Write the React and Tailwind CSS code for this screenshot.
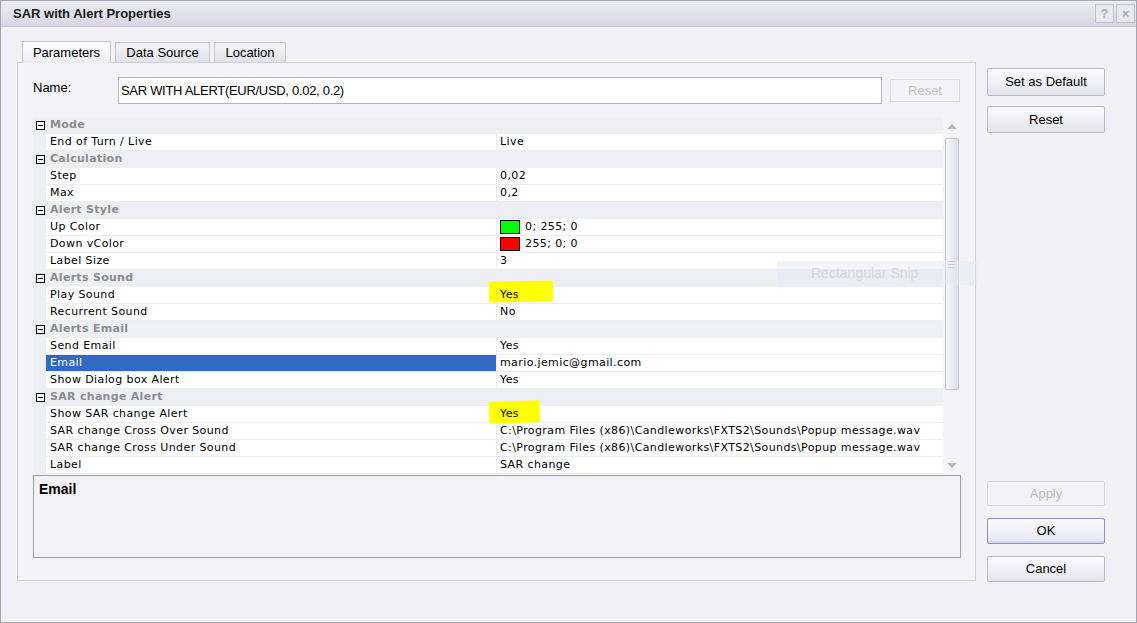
import React from 'react'

const rows = [
  { cat: 'Mode' },
  { name: 'End of Turn / Live', value: 'Live' },
  { cat: 'Calculation' },
  { name: 'Step', value: '0,02' },
  { name: 'Max', value: '0,2' },
  { cat: 'Alert Style' },
  { name: 'Up Color', value: '0; 255; 0', swatch: 'bg-[#00ff00]' },
  { name: 'Down vColor', value: '255; 0; 0', swatch: 'bg-[#ff0000]' },
  { name: 'Label Size', value: '3' },
  { cat: 'Alerts Sound' },
  { name: 'Play Sound', value: 'Yes', mark: 'a' },
  { name: 'Recurrent Sound', value: 'No' },
  { cat: 'Alerts Email' },
  { name: 'Send Email', value: 'Yes' },
  { name: 'Email', value: 'mario.jemic@gmail.com', selected: true },
  { name: 'Show Dialog box Alert', value: 'Yes' },
  { cat: 'SAR change Alert' },
  { name: 'Show SAR change Alert', value: 'Yes', mark: 'b' },
  { name: 'SAR change Cross Over Sound', value: 'C:\\Program Files (x86)\\Candleworks\\FXTS2\\Sounds\\Popup message.wav' },
  { name: 'SAR change Cross Under Sound', value: 'C:\\Program Files (x86)\\Candleworks\\FXTS2\\Sounds\\Popup message.wav' },
  { name: 'Label', value: 'SAR change' },
]

const ui = { fontFamily: '"Liberation Sans", Arial, sans-serif' }
const grid = { fontFamily: '"DejaVu Sans", Verdana, sans-serif' }

function Button({ children, disabled, primary, className = '' }) {
  return (
    <button
      className={`w-[118px] rounded-[2px] border text-[13px] ${
        disabled
          ? 'border-[#d6d6e0] bg-[#f3f3f7] text-[#b8b8c4]'
          : primary
            ? 'border-[#8e8ec8] bg-gradient-to-b from-[#fbfbfd] to-[#e6e6f2] text-black shadow-[inset_0_-2px_0_#d4d4ee]'
            : 'border-[#b8b8c8] bg-gradient-to-b from-[#fbfbfd] to-[#e4e4ee] text-black'
      } ${className}`}
      style={ui}
    >
      {children}
    </button>
  )
}

function Minus() {
  return (
    <span className="flex h-[9px] w-[9px] items-center justify-center border border-black bg-white">
      <span className="h-px w-[5px] bg-black" />
    </span>
  )
}

function Row({ r }) {
  if (r.cat) {
    return (
      <div className="flex h-[17px] items-center bg-[#eeeef5]">
        <div className="flex w-[13px] justify-center pl-[1px]">
          <Minus />
        </div>
        <span className="pl-[4px] text-[11px] font-bold tracking-[0.3px] text-[#8c8c94]" style={grid}>{r.cat}</span>
      </div>
    )
  }
  return (
    <div className="flex h-[17px] bg-[#eeeef5]">
      <div className="w-[13px]" />
      <div
        className={`flex w-[451px] items-center border-b border-r border-[#ececf3] pl-[4px] text-[11px] tracking-[0.4px] ${
          r.selected ? 'bg-[#316ac5] text-white' : 'bg-white text-black'
        }`}
        style={grid}
      >
        {r.name}
      </div>
      <div className="relative flex flex-1 items-center gap-[5px] border-b border-[#ececf3] bg-white pl-[3px] text-[11px] tracking-[0.4px] text-black" style={grid}>
        {r.mark === 'a' && <span className="absolute left-[-8px] top-[-6px] h-[21px] w-[64px] rotate-[-1deg] rounded-[2px] bg-[#ffff00]" />}
        {r.mark === 'b' && <span className="absolute left-[-8px] top-[-5px] h-[22px] w-[51px] rotate-[-2deg] rounded-[2px] bg-[#ffff00]" />}
        {r.swatch && <span className={`h-[14px] w-[20px] border border-black ${r.swatch}`} />}
        <span className="relative">{r.value}</span>
      </div>
    </div>
  )
}

export default function App() {
  return (
    <div className="relative flex h-[623px] w-[1137px] flex-col overflow-hidden border border-[#a4a4b4] bg-[#f1f1f6]">
      {/* Title bar */}
      <div className="flex h-[26px] items-center justify-between border-b border-[#c4c4d2] bg-gradient-to-b from-[#ececf3] to-[#d8d8e4] pl-[12px] pr-[1px]">
        <span className="text-[13px] font-bold text-[#1a1a1a]" style={ui}>SAR with Alert Properties</span>
        <div className="flex gap-[2px]">
          <span className="flex h-[19px] w-[19px] items-center justify-center border border-[#c0c0cc] bg-[#e8e8f0] text-[12px] font-bold text-[#a8a8b4]" style={ui}>?</span>
          <span className="flex h-[19px] w-[19px] items-center justify-center border border-[#c0c0cc] bg-[#e8e8f0] text-[13px] font-bold text-[#a8a8b4]" style={ui}>×</span>
        </div>
      </div>

      <div className="flex flex-1">
        {/* Left: tabs + panel */}
        <div className="flex w-[975px] flex-col pl-[16px] pt-[14px]">
          <div className="flex items-end gap-[4px] pl-[5px]" style={ui}>
            <div className="relative z-10 -mb-px flex h-[22px] w-[89px] items-center justify-center border border-b-0 border-[#c4c4d0] bg-gradient-to-b from-[#ffffff] to-[#ececf2] text-[13px] text-black">Parameters</div>
            <div className="flex h-[20px] w-[95px] items-center justify-center border border-b-0 border-[#c4c4d0] bg-gradient-to-b from-[#f4f4f8] to-[#e2e2ea] text-[13px] text-black">Data Source</div>
            <div className="flex h-[20px] w-[72px] items-center justify-center border border-b-0 border-[#c4c4d0] bg-gradient-to-b from-[#f4f4f8] to-[#e2e2ea] text-[13px] text-black">Location</div>
          </div>
          <div className="flex h-[519px] flex-col border border-[#cfcfdb] bg-[#f2f2f7] pl-[15px] pr-[14px] pt-[14px]">
            {/* Name row */}
            <div className="flex h-[27px] items-center" style={ui}>
              <span className="w-[85px] pb-[5px] text-[13px] text-black">Name:</span>
              <div className="flex h-[27px] w-[764px] items-center border border-[#b4b4bc] bg-white pl-[2px] text-[13px] tracking-[-0.3px] text-black">
                SAR WITH ALERT(EUR/USD, 0.02, 0.2)
              </div>
              <div className="ml-[8px] flex h-[23px] w-[70px] items-center justify-center border border-[#dcdce4] bg-[#f4f4f8] text-[13px] text-[#c0c0c8]">Reset</div>
            </div>

            {/* Property grid */}
            <div className="mt-[13px] flex h-[357px]">
              <div className="flex w-[910px] flex-col">
                {rows.map((r, i) => (
                  <Row key={i} r={r} />
                ))}
              </div>
              <div className="flex w-[17px] flex-col items-center bg-[#f4f4f8] pt-[7px]">
                <span className="h-0 w-0 border-x-[5px] border-b-[5px] border-x-transparent border-b-[#b4b4cc]" />
                <div className="mt-[9px] flex h-[252px] w-[14px] items-center justify-center rounded-[1px] border border-[#c6c6da] bg-gradient-to-r from-[#f6f6fa] to-[#dedeea]">
                  <div className="flex flex-col gap-[2px]">
                    <span className="h-px w-[7px] bg-[#b0b0c8]" />
                    <span className="h-px w-[7px] bg-[#b0b0c8]" />
                    <span className="h-px w-[7px] bg-[#b0b0c8]" />
                  </div>
                </div>
                <span className="mt-auto mb-[6px] h-0 w-0 border-x-[5px] border-t-[5px] border-x-transparent border-t-[#b4b4cc]" />
              </div>
            </div>

            {/* Description */}
            <div className="mt-[1px] h-[83px] border border-[#a0a0a8] bg-[#f2f2f7] pl-[5px]">
              <span className="text-[14px] font-bold leading-[26px] text-black" style={ui}>Email</span>
            </div>
          </div>
        </div>

        {/* Right buttons */}
        <div className="flex flex-col pl-[11px] pt-[41px]">
          <Button className="h-[28px]">Set as Default</Button>
          <Button className="mt-[10px] h-[27px]">Reset</Button>
          <Button disabled className="mt-auto h-[25px]">Apply</Button>
          <Button primary className="mt-[12px] h-[26px]">OK</Button>
          <Button className="mb-[40px] mt-[12px] h-[26px]">Cancel</Button>
        </div>
      </div>

      {/* Snipping tool ghost overlay */}
      <div className="absolute left-[776px] top-[260px] flex h-[24px] w-[200px] items-center bg-[#e6eaf6]/50 pl-[34px] text-[14px] text-[#d8d8e2]" style={ui}>
        Rectangular Snip
      </div>
    </div>
  )
}
